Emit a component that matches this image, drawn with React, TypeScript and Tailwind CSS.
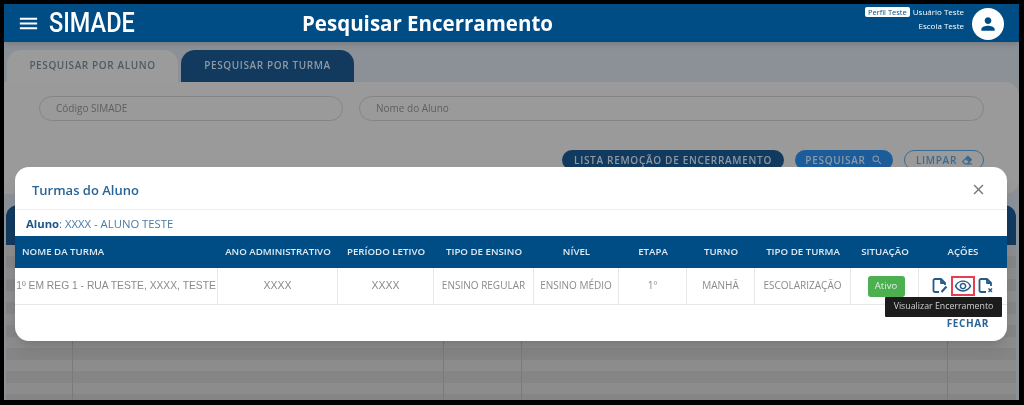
import React from 'react';
import { MdOutlineRemoveRedEye, MdPerson, MdClose, MdMenu, MdSearch } from 'react-icons/md';
import { FaEraser } from 'react-icons/fa';

const columns = [
  { label: 'NOME DA TURMA', value: '1º EM REG 1 - RUA TESTE, XXXX, TESTE', size: "font-['Liberation_Sans',sans-serif] text-[10.3px]" },
  { label: 'ANO ADMINISTRATIVO', value: 'XXXX', size: "font-['Liberation_Sans',sans-serif] text-[10.5px]" },
  { label: 'PERÍODO LETIVO', value: 'XXXX', size: "font-['Liberation_Sans',sans-serif] text-[10.5px]" },
  { label: 'TIPO DE ENSINO', value: 'ENSINO REGULAR', size: 'text-[10px]' },
  { label: 'NÍVEL', value: 'ENSINO MÉDIO', size: 'text-[10px]' },
  { label: 'ETAPA', value: '1º', size: 'text-[10px]' },
  { label: 'TURNO', value: 'MANHÃ', size: 'text-[10px]' },
  { label: 'TIPO DE TURMA', value: 'ESCOLARIZAÇÃO', size: 'text-[10px]' },
];

const DocEdit = () => (
  <svg width="16" height="17" viewBox="0 0 16 17" fill="none" stroke="#245a8a" strokeWidth="1.8">
    <path d="M7 15H3a1.5 1.5 0 0 1-1.5-1.500v-10A1.500 1.500 0 0 1 3 2h6l4 4v2" strokeLinejoin="round" />
    <path d="M9 2v4h4" strokeLinejoin="round" />
    <path d="M9.500 15l5-5.500" strokeWidth="2" />
  </svg>
);

const DocClose = () => (
  <svg width="16" height="17" viewBox="0 0 16 17" fill="none" stroke="#245a8a" strokeWidth="1.8">
    <path d="M8 15H3a1.500 1.500 0 0 1-1.500-1.500v-10A1.500 1.500 0 0 1 3 2h6l4 4v3" strokeLinejoin="round" />
    <path d="M9 2v4h4" strokeLinejoin="round" />
    <path d="M10.500 11.500l3.500 3.500M14 11.500l-3.500 3.500" strokeWidth="1.500" />
  </svg>
);

export default function App() {
  return (
    <div className="relative h-[405px] w-[1024px] overflow-hidden bg-black pb-[5px] pl-[4px] pr-[5px] pt-[4px] font-['Open_Sans',sans-serif] blur-[0.6px]">
      <div className="flex h-full flex-col overflow-hidden bg-[#8b9196]">
        {/* Top bar */}
        <header className="flex h-[38px] shrink-0 items-center bg-[#004d86] pl-[13px] pr-[15px] text-white shadow-md">
          <MdMenu size={23} className="mr-[9px]" />
          <span className="mt-[1px] w-[253px] origin-left scale-x-[0.87] font-['Roboto',sans-serif] text-[27px] font-medium leading-none">SIMADE</span>
          <h1 className="text-[20.5px] font-bold leading-none">Pesquisar Encerramento</h1>
          <div className="ml-auto flex items-center gap-[8px]">
            <div className="mb-[9px] flex flex-col items-end gap-[2px] text-[8px] leading-[12px]">
              <div className="flex items-center gap-[3px]">
                <span className="rounded-[2px] bg-white px-[3px] text-[7.5px] leading-[10px] text-[#004d86]">Perfil Teste</span>
                <span>Usuário Teste</span>
              </div>
              <span>Escola Teste</span>
            </div>
            <div className="mt-[1px] flex h-[32px] w-[32px] items-center justify-center rounded-full bg-white">
              <MdPerson size={20} className="text-[#004d86]" />
            </div>
          </div>
        </header>

        {/* Tabs */}
        <div className="mt-[8px] flex h-[32px] shrink-0 gap-[3px] pl-[3px] text-[10px] font-semibold tracking-[0.6px]">
          <div className="flex w-[171px] items-center justify-center rounded-t-[14px] bg-[#9b9b9b] pb-[1px] text-[#505a63]">PESQUISAR POR ALUNO</div>
          <div className="flex w-[173px] items-center justify-center rounded-t-[14px] bg-[#123a5f] pb-[1px] text-[#8d9aa5]">PESQUISAR POR TURMA</div>
        </div>

        {/* Search panel behind the modal */}
        <div className="flex h-[112px] shrink-0 flex-col rounded-r-[14px] bg-[#9a9a9a] pl-[35px] pr-[35px] pt-[14px]">
          <div className="flex gap-[16px] text-[10px] text-[#5f5f5f]">
            <div className="flex h-[25px] w-[304px] items-center rounded-full border border-[#858585] px-[16px]">Código SIMADE</div>
            <div className="flex h-[25px] flex-1 items-center rounded-full border border-[#858585] px-[16px]">Nome do Aluno</div>
          </div>
          <div className="mt-[29px] flex justify-end gap-[11px] text-[10px] font-semibold tracking-[0.7px]">
            <div className="flex h-[20px] w-[222px] items-center justify-center rounded-full bg-[#123a5f] text-[#8d9aa5]">LISTA REMOÇÃO DE ENCERRAMENTO</div>
            <div className="flex h-[20px] w-[98px] items-center justify-center gap-[5px] rounded-full bg-[#1d5c9a] text-[#8d9aa5]">
              PESQUISAR <MdSearch size={12} />
            </div>
            <div className="flex h-[20px] w-[80px] items-center justify-center gap-[5px] rounded-full border border-[#3b6a90] text-[#3b6a90]">
              LIMPAR <FaEraser size={10} />
            </div>
          </div>
        </div>

        {/* Results table behind the modal */}
        <div className="mt-[11px] flex flex-1 flex-col pl-[2px] pr-[3px]">
          <div className="h-[40px] shrink-0 rounded-t-[12px] bg-[#123a5f]" />
          <div className="flex-1 bg-[repeating-linear-gradient(to_bottom,#8c8c8c_0px,#8c8c8c_11.5px,#858585_11.5px,#858585_23px)]">
            <div className="grid h-full grid-cols-[67px_371px_78px_426px_1fr]">
              <div className="border-r border-[#7a7a7a]" />
              <div className="border-r border-[#7a7a7a]" />
              <div className="border-r border-[#7a7a7a]" />
              <div className="border-r border-[#7a7a7a]" />
              <div />
            </div>
          </div>
        </div>
      </div>

      {/* Modal */}
      <div className="absolute left-[15px] top-[167px] flex h-[174px] w-[992px] flex-col overflow-hidden rounded-[14px] bg-white shadow-lg">
        <div className="flex h-[43px] shrink-0 items-center justify-between border-b border-[#eeeeee] pl-[17px] pr-[20px] pt-[6px]">
          <h2 className="text-[13px] font-semibold text-[#2a6496]">Turmas do Aluno</h2>
          <MdClose size={17} className="mb-[4px] text-[#777777]" />
        </div>
        <div className="flex h-[26px] shrink-0 items-center pl-[11px] pt-[2px] text-[11.3px] text-[#4a7aa5]">
          <b className="text-[#1f5585]">Aluno</b>: XXXX - ALUNO TESTE
        </div>
        <div className="grid shrink-0 grid-cols-[203px_120px_96px_100px_85px_68px_68px_96px_68px_88px]">
          {columns.map((c, i) => (
            <div key={c.label} className={`flex h-[32px] items-center whitespace-nowrap bg-[#004d86] text-[9.7px] font-semibold text-[#dfe8f0] ${i === 0 ? 'pl-[7px]' : 'justify-center'}`}>
              {c.label}
            </div>
          ))}
          <div className="flex h-[32px] items-center justify-center bg-[#004d86] text-[9.7px] font-semibold text-[#dfe8f0]">SITUAÇÃO</div>
          <div className="flex h-[32px] items-center justify-center bg-[#004d86] text-[9.7px] font-semibold text-[#dfe8f0]">AÇÕES</div>
          {columns.map((c) => (
            <div key={c.label + c.value} className={`flex h-[37px] items-center justify-center whitespace-nowrap border-b border-r border-[#e8e8e8] pb-[1px] text-[#8a8a8a] ${c.size}`}>
              {c.value}
            </div>
          ))}
          <div className="flex h-[37px] items-center justify-center border-b border-r border-[#e8e8e8] pl-[3px] pt-[1px]">
            <span className="flex h-[21px] w-[37px] items-center justify-center rounded-[3px] bg-[#4caf50] text-[9.5px] text-[#e4f3e4]">Ativo</span>
          </div>
          <div className="flex h-[37px] items-center justify-center gap-[3px] border-b border-[#e8e8e8] pb-[1px]">
            <DocEdit />
            <span className="flex h-[20px] w-[24px] items-center justify-center border-2 border-[#e5404f]">
              <MdOutlineRemoveRedEye size={18} className="text-[#245a8a]" />
            </span>
            <DocClose />
          </div>
        </div>
        <div className="flex flex-1 items-end justify-end pb-[10px] pr-[18px] text-[10px] font-bold tracking-[0.6px] text-[#2a6496]">FECHAR</div>
      </div>

      {/* Tooltip over the actions column */}
      <div className="absolute left-[885px] top-[297px] flex h-[20px] w-[117px] items-center justify-center whitespace-nowrap rounded-[1px] bg-[#1c1c1c] text-[8.8px] text-[#d0d0d0]">
        Visualizar Encerramento
      </div>
    </div>
  );
}
